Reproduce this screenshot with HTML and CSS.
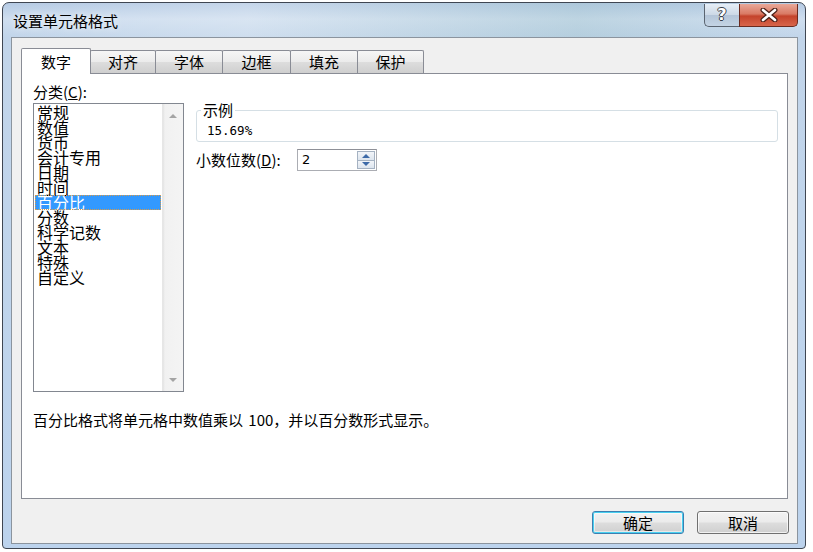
FILE: index.html
```html
<!DOCTYPE html>
<html lang="zh-CN">
<head>
<meta charset="utf-8">
<title>设置单元格格式</title>
<link rel="stylesheet" href="styles.css">
</head>
<body>
<div class="window">
  <div class="titlebar">
    <span class="title">设置单元格格式</span>
    <div class="caption-btns">
      <div class="cap help"><span class="q">?</span></div>
      <div class="cap close">
        <svg width="22" height="14" viewBox="0 0 22 14">
          <path d="M5 2 L17 12 M17 2 L5 12" stroke="#4a2018" stroke-width="5" stroke-linecap="round" fill="none"/>
          <path d="M5 2 L17 12 M17 2 L5 12" stroke="#ffffff" stroke-width="2.6" stroke-linecap="round" fill="none"/>
        </svg>
      </div>
    </div>
  </div>
  <div class="client">
    <div class="tabs">
      <div class="tab active t1">数字</div>
      <div class="tab t2">对齐</div>
      <div class="tab t3">字体</div>
      <div class="tab t4">边框</div>
      <div class="tab t5">填充</div>
      <div class="tab t6">保护</div>
    </div>
    <div class="panel">
      <div class="panel-body">
        <div class="left-col">
          <div class="lbl">分类(<u>C</u>):</div>
          <div class="listbox">
            <ul class="items">
              <li>常规</li>
              <li>数值</li>
              <li>货币</li>
              <li>会计专用</li>
              <li>日期</li>
              <li>时间</li>
              <li class="sel">百分比</li>
              <li>分数</li>
              <li>科学记数</li>
              <li>文本</li>
              <li>特殊</li>
              <li>自定义</li>
            </ul>
            <div class="vscroll">
              <span class="arrow up"></span>
              <span class="arrow down"></span>
            </div>
          </div>
        </div>
        <div class="right-col">
          <fieldset class="group">
            <legend>示例</legend>
            <div class="sample">15.69%</div>
          </fieldset>
          <div class="spin-row">
            <span class="spin-lbl">小数位数(<u>D</u>):</span>
            <div class="spinbox">
              <span class="spin-val">2</span>
              <div class="spin-btns">
                <div class="sb"><span class="sarrow sup"></span></div>
                <div class="sb"><span class="sarrow sdown"></span></div>
              </div>
            </div>
          </div>
        </div>
      </div>
      <p class="desc">百分比格式将单元格中数值乘以 100，并以百分数形式显示。</p>
    </div>
    <div class="actions">
      <button class="btn default">确定</button>
      <button class="btn">取消</button>
    </div>
  </div>
</div>
</body>
</html>
```

FILE: styles.css
```css
* { box-sizing: border-box; }
html, body { margin: 0; padding: 0; background: #ffffff; }
body {
  font-family: "Noto Sans CJK SC", "Noto Sans", sans-serif;
  color: #000;
}
.window {
  margin: 2px 0 0 2px;
  width: 804px;
  height: 547px;
  border: 1px solid #3f4652;
  border-radius: 7px 7px 4px 4px;
  padding: 0 7px 4px 8px;
  background: linear-gradient(180deg, #b6cbe4 0px, #cfdeef 16px, #c2d5ea 34px, #bcd3ed 100%);
  display: flex;
  flex-direction: column;
}
.titlebar {
  height: 34px;
  display: flex;
  justify-content: space-between;
  align-items: flex-start;
  background: linear-gradient(90deg, rgba(255,255,255,0) 0%, rgba(255,255,255,0.2) 30%, rgba(150,190,195,0.3) 72%, rgba(255,255,255,0) 100%);
}
.title {
  font-size: 15px;
  line-height: 18px;
  margin: 9px 0 0 2px;
  color: #000;
  text-shadow: 0 0 6px rgba(255,255,255,0.9);
}
.caption-btns {
  display: flex;
  margin-top: 1px;
}
.cap {
  height: 23px;
  display: flex;
  align-items: center;
  justify-content: center;
  border: 1px solid #5a6470;
  border-top: none;
}
.help {
  width: 35px;
  border-radius: 0 0 0 5px;
  border-right: none;
  background: linear-gradient(180deg, #e6eef7 0%, #cdd9e6 48%, #b4c5d8 52%, #c4d4e4 100%);
}
.q {
  font-family: "DejaVu Sans", sans-serif;
  font-weight: bold;
  font-size: 16px;
  line-height: 16px;
  color: #fff;
  text-shadow: 1px 0 0 #3a4048, -1px 0 0 #3a4048, 0 1px 0 #3a4048, 0 -1px 0 #3a4048;
}
.close {
  width: 59px;
  border-radius: 0 0 5px 0;
  border-color: #6b2a1e;
  background: linear-gradient(180deg, #e9a898 0%, #d97a64 45%, #c4432b 55%, #d8654a 100%);
}
.client {
  flex: 1;
  border: 1px solid #8b949e;
  background: #f0f0f0;
  padding: 10px 0 0 9px;
  display: flex;
  flex-direction: column;
}
.tabs {
  display: flex;
  align-items: flex-start;
  height: 25px;
}
.tab {
  height: 23px;
  margin-top: 2px;
  margin-left: -1px;
  border: 1px solid #898c95;
  border-bottom: none;
  border-radius: 2px 2px 0 0;
  background: linear-gradient(180deg, #f6f6f6 0%, #ebebeb 50%, #dddddd 51%, #cfcfcf 100%);
  font-size: 15px;
  line-height: 21px;
  text-align: center;
}
.tab.active {
  height: 26px;
  margin-top: 0;
  margin-left: 0;
  background: #ffffff;
  position: relative;
  z-index: 1;
  line-height: 26px;
}
.t1 { width: 70px; }
.t2 { width: 66px; }
.t3 { width: 68px; }
.t4 { width: 69px; }
.t5 { width: 68px; }
.t6 { width: 67px; }
.panel {
  width: 767px;
  height: 426px;
  background: #ffffff;
  border: 1px solid #898c95;
  padding: 9px 0 0 11px;
}
.panel-body {
  display: flex;
  gap: 12px;
}
.lbl {
  font-size: 15px;
  line-height: 18px;
  height: 20px;
}
u { text-decoration: underline; text-underline-offset: 1px; }
.listbox {
  width: 151px;
  height: 289px;
  border: 1px solid #828790;
  display: flex;
  background: #fff;
}
.items {
  list-style: none;
  margin: 0;
  padding: 1px 1px 0 1px;
  width: 128px;
}
.items li {
  font-size: 16px;
  line-height: 15px;
  height: 15px;
  padding-left: 2px;
  white-space: nowrap;
}
.items li.sel {
  background: #3399ff;
  color: #fff;
  outline: 1px dotted #d89a48;
  outline-offset: -1px;
}
.vscroll {
  width: 21px;
  background: linear-gradient(90deg, #e3e3e3 0px, #f1f1f1 2px, #f4f4f4 100%);
  border-left: 1px solid #e6e6e6;
  display: flex;
  flex-direction: column;
  justify-content: space-between;
  align-items: center;
  padding: 10px 0 9px;
}
.arrow {
  width: 0;
  height: 0;
  border-left: 4px solid transparent;
  border-right: 4px solid transparent;
}
.arrow.up { border-bottom: 4px solid #a4a4a4; }
.arrow.down { border-top: 4px solid #a4a4a4; }
.right-col {
  padding-top: 18px;
}
.group {
  width: 582px;
  margin: 0;
  padding: 0 0 1px 4px;
  border: 1px solid #d5dfe5;
  border-radius: 3px;
}
.group legend {
  font-size: 15px;
  line-height: 18px;
  padding: 0 2px;
}
.sample {
  font-family: "DejaVu Sans Mono", "Liberation Mono", monospace;
  font-size: 12.5px;
  line-height: 18px;
  margin: 3px 0 0 6px;
}
.spin-row {
  display: flex;
  align-items: center;
  margin-top: 7px;
}
.spin-lbl {
  width: 101px;
  font-size: 15px;
  line-height: 18px;
}
.spinbox {
  width: 80px;
  height: 22px;
  border: 1px solid #abadb3;
  border-top-color: #8e9097;
  background: #fff;
  display: flex;
  justify-content: space-between;
}
.spin-val {
  font-family: "DejaVu Sans", sans-serif;
  font-size: 13px;
  line-height: 20px;
  padding-left: 4px;
}
.spin-btns {
  width: 18px;
  display: flex;
  flex-direction: column;
  margin: 1px 1px 1px 0;
}
.sb {
  flex: 1;
  border: 1px solid #a5b2c2;
  background: linear-gradient(180deg, #f2f5f9 0%, #dde5ee 100%);
  display: flex;
  align-items: center;
  justify-content: center;
}
.sb + .sb { border-top: none; }
.sarrow {
  width: 0;
  height: 0;
  border-left: 4px solid transparent;
  border-right: 4px solid transparent;
}
.sup { border-bottom: 4px solid #3d6aa8; }
.sdown { border-top: 4px solid #3d6aa8; }
.desc {
  margin: 19px 0 0 0;
  font-size: 15px;
  line-height: 18px;
  word-spacing: 2px;
}
.actions {
  display: flex;
  justify-content: flex-end;
  gap: 13px;
  padding-right: 8px;
  margin-top: 12px;
}
.btn {
  width: 92px;
  height: 23px;
  padding: 0;
  font-family: "Noto Sans CJK SC", sans-serif;
  font-size: 15px;
  line-height: 20px;
  color: #000;
  border: 1px solid #707070;
  border-radius: 3px;
  background: linear-gradient(180deg, #f2f2f2 0%, #ebebeb 48%, #dddddd 52%, #cfcfcf 100%);
  box-shadow: inset 0 0 0 1px rgba(255,255,255,0.7);
}
.btn.default {
  border-color: #3c7fb1;
  box-shadow: inset 0 0 0 1px #48d0f0, inset 0 0 0 2px rgba(255,255,255,0.5);
}
```
